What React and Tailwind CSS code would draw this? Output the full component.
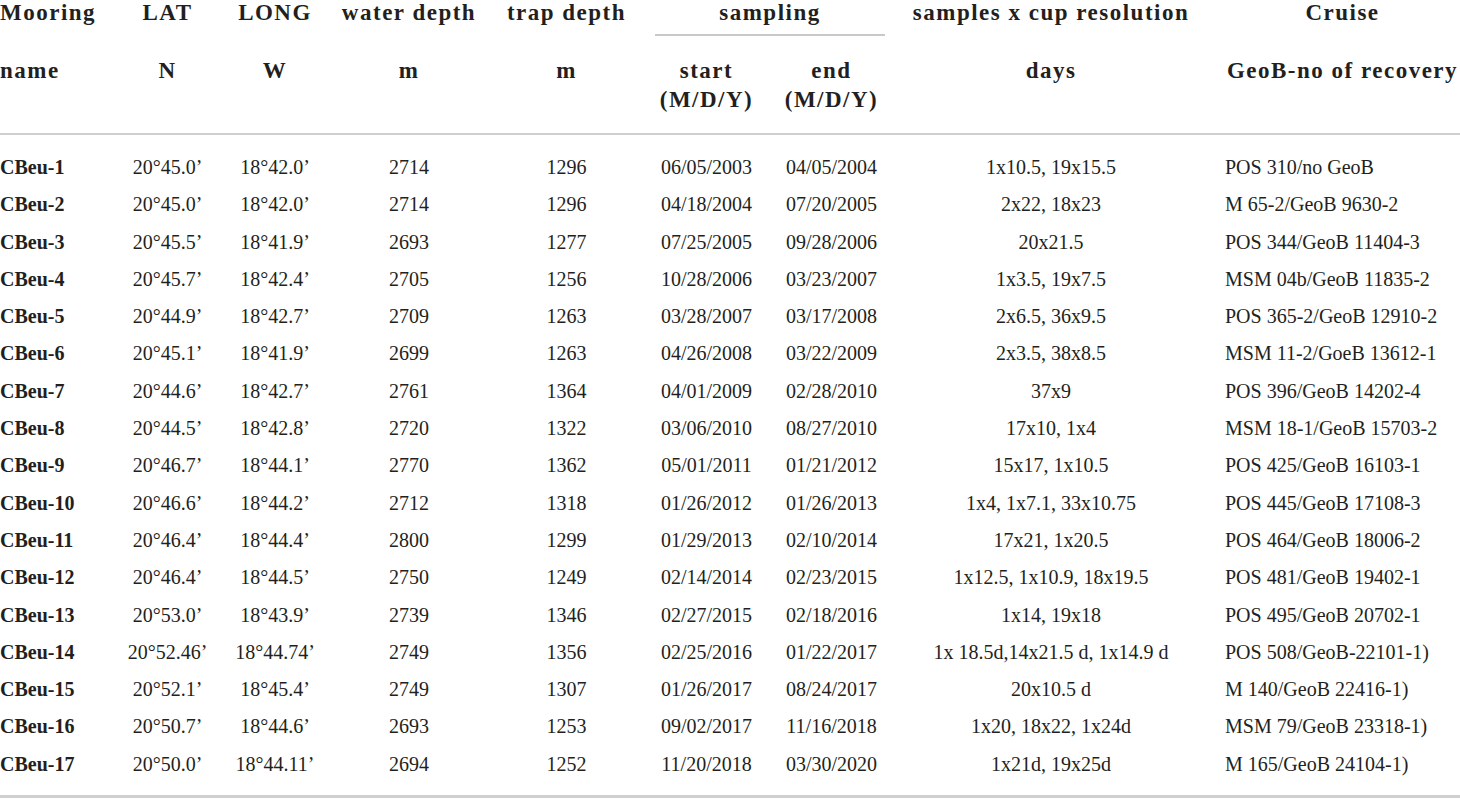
const rows = [
  ["CBeu-1", "20°45.0’", "18°42.0’", "2714", "1296", "06/05/2003", "04/05/2004", "1x10.5, 19x15.5", "POS 310/no GeoB"],
  ["CBeu-2", "20°45.0’", "18°42.0’", "2714", "1296", "04/18/2004", "07/20/2005", "2x22, 18x23", "M 65-2/GeoB 9630-2"],
  ["CBeu-3", "20°45.5’", "18°41.9’", "2693", "1277", "07/25/2005", "09/28/2006", "20x21.5", "POS 344/GeoB 11404-3"],
  ["CBeu-4", "20°45.7’", "18°42.4’", "2705", "1256", "10/28/2006", "03/23/2007", "1x3.5, 19x7.5", "MSM 04b/GeoB 11835-2"],
  ["CBeu-5", "20°44.9’", "18°42.7’", "2709", "1263", "03/28/2007", "03/17/2008", "2x6.5, 36x9.5", "POS 365-2/GeoB 12910-2"],
  ["CBeu-6", "20°45.1’", "18°41.9’", "2699", "1263", "04/26/2008", "03/22/2009", "2x3.5, 38x8.5", "MSM 11-2/GoeB 13612-1"],
  ["CBeu-7", "20°44.6’", "18°42.7’", "2761", "1364", "04/01/2009", "02/28/2010", "37x9", "POS 396/GeoB 14202-4"],
  ["CBeu-8", "20°44.5’", "18°42.8’", "2720", "1322", "03/06/2010", "08/27/2010", "17x10, 1x4", "MSM 18-1/GeoB 15703-2"],
  ["CBeu-9", "20°46.7’", "18°44.1’", "2770", "1362", "05/01/2011", "01/21/2012", "15x17, 1x10.5", "POS 425/GeoB 16103-1"],
  ["CBeu-10", "20°46.6’", "18°44.2’", "2712", "1318", "01/26/2012", "01/26/2013", "1x4, 1x7.1, 33x10.75", "POS 445/GeoB 17108-3"],
  ["CBeu-11", "20°46.4’", "18°44.4’", "2800", "1299", "01/29/2013", "02/10/2014", "17x21, 1x20.5", "POS 464/GeoB 18006-2"],
  ["CBeu-12", "20°46.4’", "18°44.5’", "2750", "1249", "02/14/2014", "02/23/2015", "1x12.5, 1x10.9, 18x19.5", "POS 481/GeoB 19402-1"],
  ["CBeu-13", "20°53.0’", "18°43.9’", "2739", "1346", "02/27/2015", "02/18/2016", "1x14, 19x18", "POS 495/GeoB 20702-1"],
  ["CBeu-14", "20°52.46’", "18°44.74’", "2749", "1356", "02/25/2016", "01/22/2017", "1x 18.5d,14x21.5 d, 1x14.9 d", "POS 508/GeoB-22101-1)"],
  ["CBeu-15", "20°52.1’", "18°45.4’", "2749", "1307", "01/26/2017", "08/24/2017", "20x10.5 d", "M 140/GeoB 22416-1)"],
  ["CBeu-16", "20°50.7’", "18°44.6’", "2693", "1253", "09/02/2017", "11/16/2018", "1x20, 18x22, 1x24d", "MSM 79/GeoB 23318-1)"],
  ["CBeu-17", "20°50.0’", "18°44.11’", "2694", "1252", "11/20/2018", "03/30/2020", "1x21d, 19x25d", "M 165/GeoB 24104-1)"],
];

const grid = "grid grid-cols-[115px_105px_110px_158px_157px_123px_127px_312px_253px]";

export default function App() {
  return (
    <div className="w-[1460px] h-[800px] overflow-hidden bg-white text-[#231f20] font-['Liberation_Serif',serif]">
      <div className="border-b-2 border-[#cfcfcf] font-bold text-[23px] tracking-[1.5px] whitespace-nowrap">
        <div className={`${grid} h-[38px] leading-[26px]`}>
          <div>Mooring</div>
          <div className="text-center">LAT</div>
          <div className="text-center">LONG</div>
          <div className="text-center">water depth</div>
          <div className="text-center">trap depth</div>
          <div className="col-span-2 px-[10px]">
            <div className="text-center h-[36px] border-b-2 border-[#c8c8c8]">sampling</div>
          </div>
          <div className="text-center">samples x cup resolution</div>
          <div className="pl-[18px] text-center">Cruise</div>
        </div>
        <div className={`${grid} pt-[18px] pb-[19px] leading-[29px] h-[95px]`}>
          <div>name</div>
          <div className="text-center">N</div>
          <div className="text-center">W</div>
          <div className="text-center">m</div>
          <div className="text-center">m</div>
          <div className="text-center">start<br />(M/D/Y)</div>
          <div className="text-center">end<br />(M/D/Y)</div>
          <div className="text-center">days</div>
          <div className="pl-[18px] text-center">GeoB-no of recovery</div>
        </div>
      </div>
      <div className="pt-[14px] pb-[12px] border-b-[3px] border-[#cfcfcf] text-[20px] leading-[37.3px] whitespace-nowrap">
        {rows.map((r) => (
          <div key={r[0]} className={grid}>
            <div className="font-bold">{r[0]}</div>
            <div className="text-center">{r[1]}</div>
            <div className="text-center">{r[2]}</div>
            <div className="text-center">{r[3]}</div>
            <div className="text-center">{r[4]}</div>
            <div className="text-center">{r[5]}</div>
            <div className="text-center">{r[6]}</div>
            <div className="text-center">{r[7]}</div>
            <div className="pl-[18px]">{r[8]}</div>
          </div>
        ))}
      </div>
    </div>
  );
}
